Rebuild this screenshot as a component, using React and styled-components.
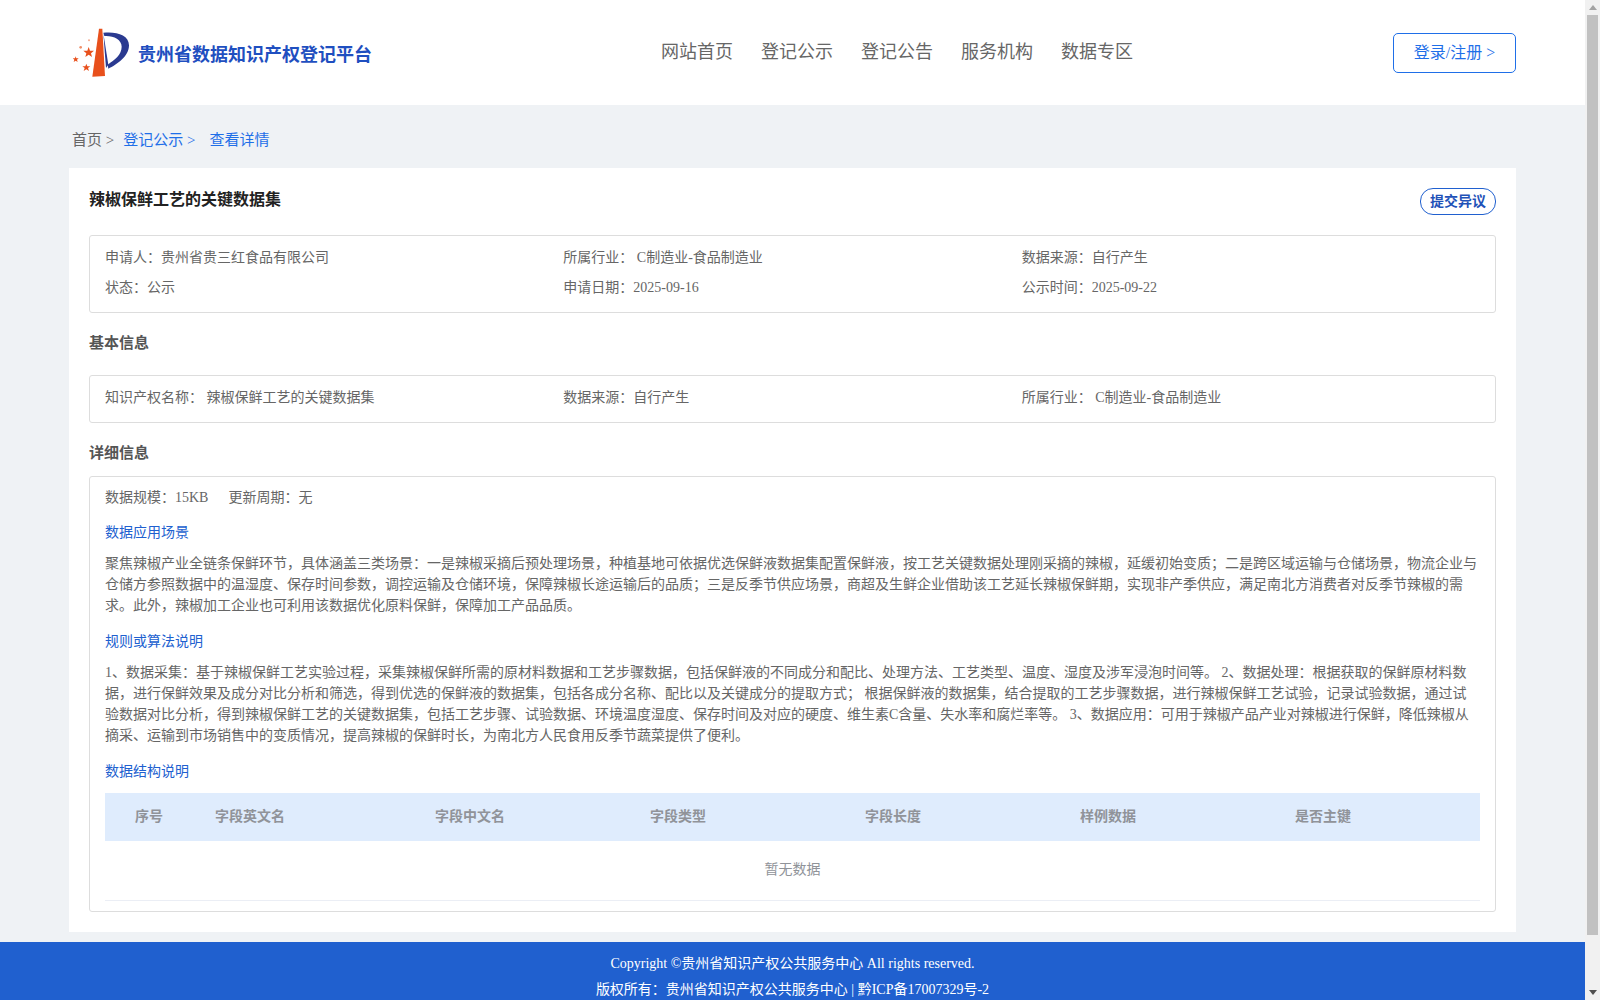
import styled, { createGlobalStyle } from 'styled-components'

const GlobalStyle = createGlobalStyle`
  body {
    margin: 0;
    background: #eff2f5;
    color: #666;
    font-family: 'Liberation Serif', 'Noto Sans CJK SC', serif;
    font-size: 14px;
  }
  #root {
    width: 1585px;
  }
`

const Header = styled.header`
  display: flex;
  align-items: center;
  height: 105px;
  padding: 0 69px;
  background: #fff;
`

const Brand = styled.div`
  display: flex;
  align-items: center;
  width: 592px;
  padding-left: 4px;
  box-sizing: border-box;
  h1 {
    margin: 0 0 0 5px;
    font-size: 18px;
    font-weight: 700;
    color: #1f4fc0;
  }
`

const Nav = styled.nav`
  display: flex;
  gap: 28px;
  flex: 1;
  margin-bottom: 6px;
  a {
    font-size: 18px;
    color: #666;
    text-decoration: none;
  }
`

const Login = styled.button`
  width: 123px;
  height: 40px;
  padding: 0 0 3px;
  border: 1px solid #1f6fe8;
  border-radius: 5px;
  background: #fff;
  color: #1f6fe8;
  font-family: inherit;
  font-size: 16px;
`

const Crumbs = styled.div`
  display: flex;
  align-items: center;
  height: 63px;
  padding: 4px 72px 0;
  box-sizing: border-box;
  font-size: 15px;
  color: #1f6fe8;
  span:first-child {
    color: #666;
  }
  span + span {
    margin-left: 9px;
  }
  span:last-child {
    margin-left: 14px;
  }
`

const Card = styled.main`
  margin: 0 69px;
  padding: 20px;
  background: #fff;
`

const TitleRow = styled.div`
  display: flex;
  justify-content: space-between;
  align-items: flex-start;
  height: 47px;
  h2 {
    margin: 1px 0 0;
    font-size: 16px;
    line-height: 22px;
    color: #222;
  }
`

const Dissent = styled.button`
  width: 76px;
  height: 27px;
  padding: 0 0 4px;
  border: 1px solid #2060cf;
  border-radius: 13px;
  background: #fff;
  color: #1f52b8;
  font-family: inherit;
  font-size: 14px;
  font-weight: 700;
`

const InfoBox = styled.section`
  border: 1px solid #ddd;
  border-radius: 3px;
  padding: ${p => p.$padding};
`

const InfoRow = styled.div`
  display: grid;
  grid-template-columns: repeat(3, 1fr);
  line-height: 30px;
`

const SectionTitle = styled.h3`
  margin: 0;
  height: ${p => p.$height}px;
  padding-top: ${p => p.$top}px;
  box-sizing: border-box;
  font-size: 15px;
  line-height: 22px;
  font-weight: 700;
  color: #555;
`

const Meta = styled.div`
  line-height: 21px;
  span + span {
    margin-left: 20px;
  }
`

const BlueTitle = styled.h4`
  margin: ${p => p.$top}px 0 0;
  font-size: 14px;
  font-weight: 400;
  line-height: 21px;
  color: #2060cf;
`

const Para = styled.p`
  margin: ${p => p.$top}px 0 0;
  line-height: 21px;
  color: #666;
`

const TableHead = styled.div`
  display: grid;
  grid-template-columns: 88px 220px 215px 215px 215px 215px 1fr;
  align-items: center;
  height: 48px;
  padding-bottom: 4px;
  box-sizing: border-box;
  margin-top: 11px;
  background: #dfecfd;
  font-weight: 700;
  color: #909399;
  div {
    padding-left: 22px;
  }
  div:first-child {
    padding-left: 0;
    text-align: center;
  }
`

const Empty = styled.div`
  height: 59px;
  line-height: 57px;
  text-align: center;
  color: #909399;
  border-bottom: 1px solid #ebeef5;
`

const Footer = styled.footer`
  margin-top: 10px;
  padding: 9px 0 57px;
  background: #2060cf;
  color: #fff;
  font-size: 14px;
  line-height: 26px;
  text-align: center;
`

const ScrollBar = styled.div`
  position: fixed;
  top: 0;
  right: 0;
  bottom: 0;
  display: flex;
  flex-direction: column;
  align-items: center;
  width: 15px;
  background: #f1f1f1;
`

const ScrollArrow = styled.div`
  flex: none;
  width: 0;
  height: 0;
  margin: ${p => (p.$down ? '0 0 5px' : '5px 0 0')};
  border-left: 4px solid transparent;
  border-right: 4px solid transparent;
  border-bottom: ${p => (p.$down ? 'none' : '5px solid #a3a3a3')};
  border-top: ${p => (p.$down ? '5px solid #505050' : 'none')};
`

const ScrollThumb = styled.div`
  flex: none;
  width: 11px;
  height: 920px;
  margin-top: 5px;
  background: #c1c1c1;
`

const ScrollGap = styled.div`
  flex: 1;
`

const Logo = () => (
  <svg width="60" height="54" viewBox="40 35 180 160">
    <path d="M118 42 L128 42 L136 184 L98 186 Z" fill="#e8501c" />
    <path d="M131 54 C170 50 208 60 208 92 C208 125 172 150 146 162 L144 150 C165 135 186 120 186 96 C186 74 160 62 134 64 Z" fill="#2a3a90" />
    <path d="M131 56 L146 150 L139 160 Z" fill="#2a3a90" />
    <g fill="#e8501c">
      <polygon points="87,97 91,108 103,108 94,116 97,127 87,120 77,127 80,116 71,108 83,108" />
      <polygon points="48,125 50,131 57,131 52,135 54,142 48,138 42,142 44,135 39,131 46,131" />
      <polygon points="80,147 83,155 92,155 85,160 88,169 80,164 72,169 75,160 68,155 77,155" />
    </g>
    <circle cx="63" cy="98" r="4" fill="#f0906a" />
    <circle cx="88" cy="77" r="3" fill="#f3ab90" />
  </svg>
)

const columns = ['序号', '字段英文名', '字段中文名', '字段类型', '字段长度', '样例数据', '是否主键']

export default function App() {
  return (
    <>
      <GlobalStyle />
      <Header>
        <Brand>
          <Logo />
          <h1>贵州省数据知识产权登记平台</h1>
        </Brand>
        <Nav>
          <a href="#">网站首页</a>
          <a href="#">登记公示</a>
          <a href="#">登记公告</a>
          <a href="#">服务机构</a>
          <a href="#">数据专区</a>
        </Nav>
        <Login>登录/注册 &gt;</Login>
      </Header>
      <Crumbs>
        <span>首页 &gt;</span>
        <span>登记公示 &gt;</span>
        <span>查看详情</span>
      </Crumbs>
      <Card>
        <TitleRow>
          <h2>辣椒保鲜工艺的关键数据集</h2>
          <Dissent>提交异议</Dissent>
        </TitleRow>
        <InfoBox $padding="7px 15px 9px">
          <InfoRow>
            <div>申请人：贵州省贵三红食品有限公司</div>
            <div>所属行业： C制造业-食品制造业</div>
            <div>数据来源：自行产生</div>
          </InfoRow>
          <InfoRow>
            <div>状态：公示</div>
            <div>申请日期：2025-09-16</div>
            <div>公示时间：2025-09-22</div>
          </InfoRow>
        </InfoBox>
        <SectionTitle $top={19} $height={62}>基本信息</SectionTitle>
        <InfoBox $padding="7px 15px 9px">
          <InfoRow>
            <div>知识产权名称： 辣椒保鲜工艺的关键数据集</div>
            <div>数据来源：自行产生</div>
            <div>所属行业： C制造业-食品制造业</div>
          </InfoRow>
        </InfoBox>
        <SectionTitle $top={19} $height={53}>详细信息</SectionTitle>
        <InfoBox $padding="10px 15px 10px">
          <Meta>
            <span>数据规模：15KB</span>
            <span>更新周期：无</span>
          </Meta>
          <BlueTitle $top={14}>数据应用场景</BlueTitle>
          <Para $top={10}>聚焦辣椒产业全链条保鲜环节，具体涵盖三类场景：一是辣椒采摘后预处理场景，种植基地可依据优选保鲜液数据集配置保鲜液，按工艺关键数据处理刚采摘的辣椒，延缓初始变质；二是跨区域运输与仓储场景，物流企业与仓储方参照数据中的温湿度、保存时间参数，调控运输及仓储环境，保障辣椒长途运输后的品质；三是反季节供应场景，商超及生鲜企业借助该工艺延长辣椒保鲜期，实现非产季供应，满足南北方消费者对反季节辣椒的需求。此外，辣椒加工企业也可利用该数据优化原料保鲜，保障加工产品品质。</Para>
          <BlueTitle $top={15}>规则或算法说明</BlueTitle>
          <Para $top={10}>1、数据采集：基于辣椒保鲜工艺实验过程，采集辣椒保鲜所需的原材料数据和工艺步骤数据，包括保鲜液的不同成分和配比、处理方法、工艺类型、温度、湿度及涉军浸泡时间等。 2、数据处理：根据获取的保鲜原材料数据，进行保鲜效果及成分对比分析和筛选，得到优选的保鲜液的数据集，包括各成分名称、配比以及关键成分的提取方式； 根据保鲜液的数据集，结合提取的工艺步骤数据，进行辣椒保鲜工艺试验，记录试验数据，通过试验数据对比分析，得到辣椒保鲜工艺的关键数据集，包括工艺步骤、试验数据、环境温度湿度、保存时间及对应的硬度、维生素C含量、失水率和腐烂率等。 3、数据应用：可用于辣椒产品产业对辣椒进行保鲜，降低辣椒从摘采、运输到市场销售中的变质情况，提高辣椒的保鲜时长，为南北方人民食用反季节蔬菜提供了便利。</Para>
          <BlueTitle $top={15}>数据结构说明</BlueTitle>
          <TableHead>
            {columns.map(name => (
              <div key={name}>{name}</div>
            ))}
          </TableHead>
          <Empty>暂无数据</Empty>
        </InfoBox>
      </Card>
      <Footer>
        <div>Copyright ©贵州省知识产权公共服务中心 All rights reserved.</div>
        <div>版权所有：贵州省知识产权公共服务中心 | 黔ICP备17007329号-2</div>
      </Footer>
      <ScrollBar>
        <ScrollArrow />
        <ScrollThumb />
        <ScrollGap />
        <ScrollArrow $down />
      </ScrollBar>
    </>
  )
}
